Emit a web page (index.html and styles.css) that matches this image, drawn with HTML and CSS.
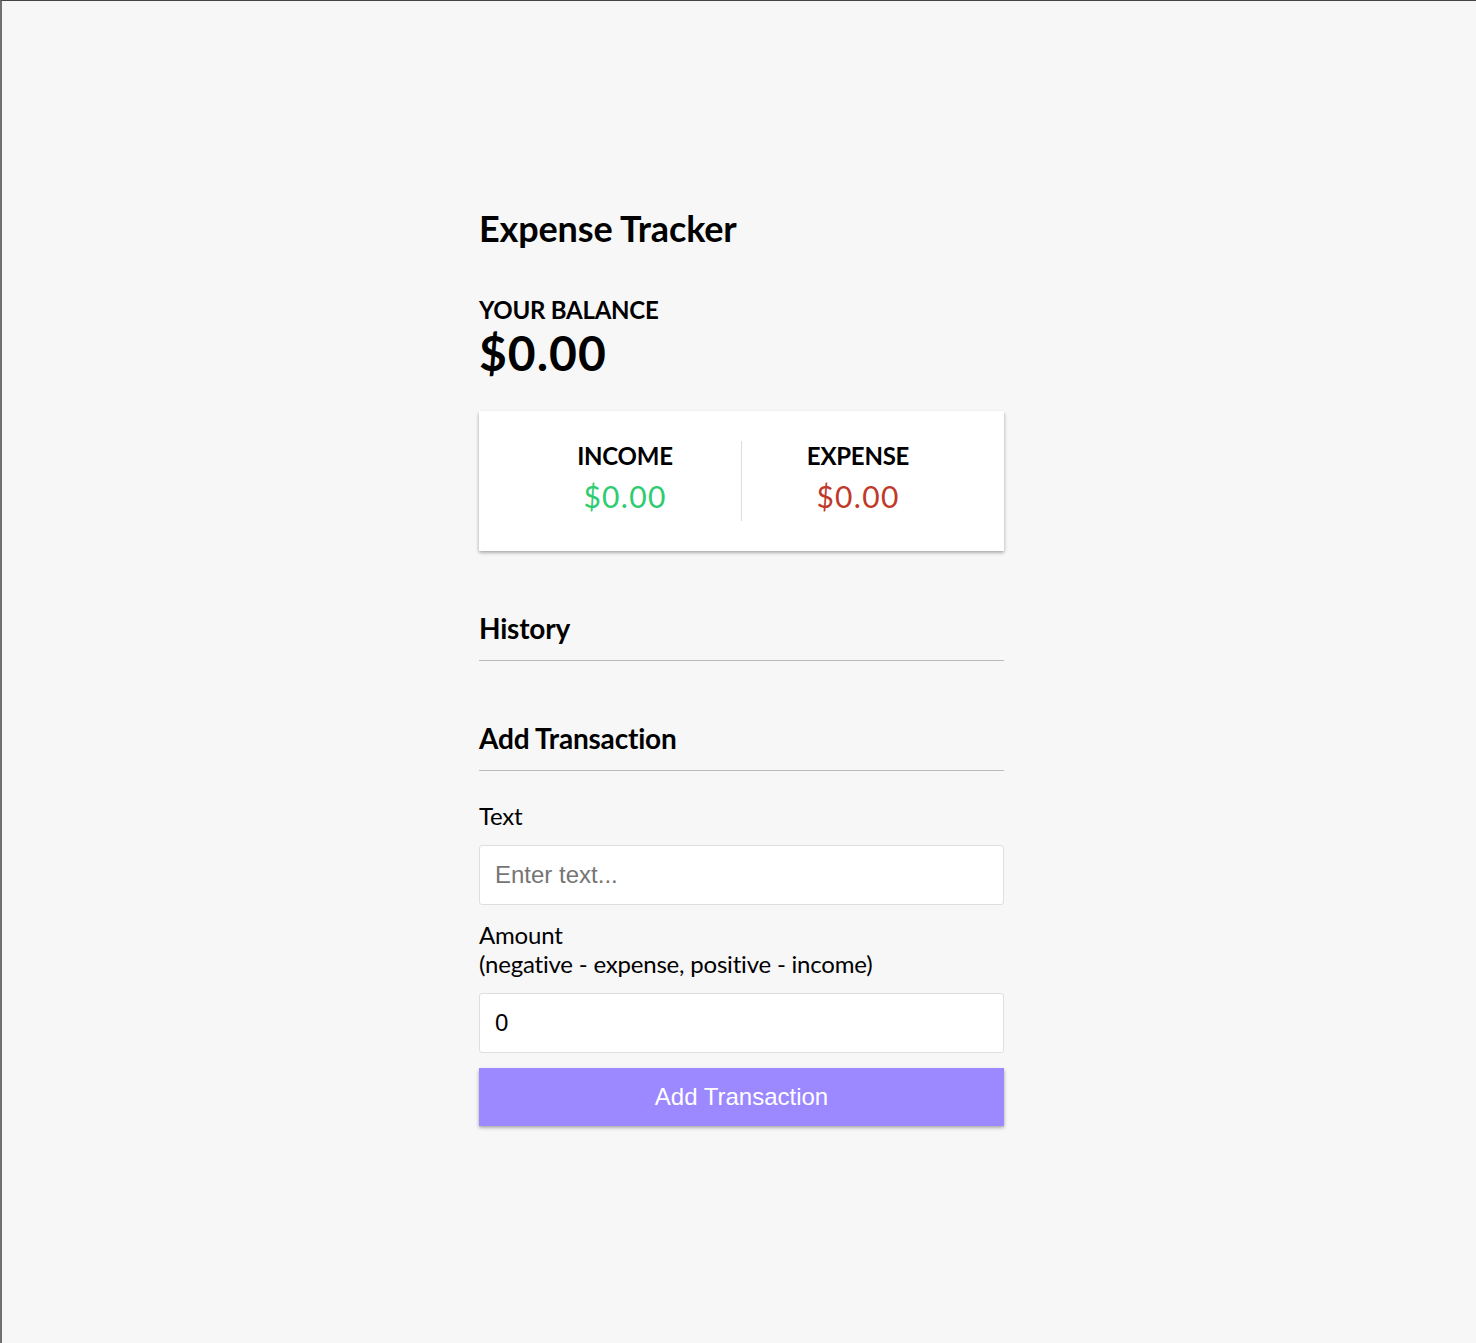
FILE: index.html
```html
<!DOCTYPE html>
<html lang="en">
<head>
  <meta charset="UTF-8">
  <meta name="viewport" content="width=device-width, initial-scale=1.0">
  <title>Expense Tracker</title>
  <link rel="stylesheet" href="styles.css">
</head>
<body>
  <div class="container">
    <h2>Expense Tracker</h2>

    <h4>Your Balance</h4>
    <h1 id="balance">$0.00</h1>

    <div class="inc-exp-container">
      <div>
        <h4>Income</h4>
        <p id="money-plus" class="money plus">$0.00</p>
      </div>
      <div>
        <h4>Expense</h4>
        <p id="money-minus" class="money minus">$0.00</p>
      </div>
    </div>

    <h3>History</h3>
    <ul id="list" class="list"></ul>

    <h3>Add Transaction</h3>
    <form id="form">
      <div class="form-control">
        <label for="text">Text</label>
        <input type="text" id="text" placeholder="Enter text...">
      </div>
      <div class="form-control">
        <label for="amount">Amount <br>(negative - expense, positive - income)</label>
        <input type="number" id="amount" value="0">
      </div>
      <button class="btn">Add Transaction</button>
    </form>
  </div>
</body>
</html>
```

FILE: styles.css
```css
:root {
  --box-shadow: 0 1.5px 4.5px rgba(0, 0, 0, 0.12), 0 1.5px 3px rgba(0, 0, 0, 0.24);
}

* {
  box-sizing: border-box;
}

body {
  background-color: #f7f7f7;
  margin: 0;
  padding-left: 5px;
  min-height: 100vh;
  border-top: 1px solid #444;
  border-left: 2px solid #707070;
  font-family: 'Lato', sans-serif;
  letter-spacing: -0.2px;
  color: #000;
}

.container {
  width: 525px;
  margin: 0 auto;
  padding-top: 205px;
}

h1 {
  font-size: 48px;
  letter-spacing: 1px;
  margin: 0;
}

h2 {
  font-size: 36px;
  letter-spacing: -0.15px;
  margin: 0 0 45px;
}

h3 {
  font-size: 28px;
  border-bottom: 1px solid #bbb;
  padding-bottom: 15px;
  margin: 60px 0 15px;
}

h4 {
  font-size: 24px;
  letter-spacing: -0.25px;
  margin: 0;
  text-transform: uppercase;
}

.inc-exp-container {
  background-color: #fff;
  box-shadow: var(--box-shadow);
  padding: 30px;
  display: flex;
  justify-content: space-between;
  margin: 30px 0;
}

.inc-exp-container > div {
  flex: 1;
  text-align: center;
}

.inc-exp-container > div:first-of-type {
  border-right: 1px solid #dedede;
}

.money {
  font-size: 30px;
  letter-spacing: 1.3px;
  margin: 7.5px 0;
}

.money.plus {
  color: #2ecc71;
}

.money.minus {
  color: #c0392b;
}

.list {
  list-style-type: none;
  padding: 0;
  margin: 24px 0 60px;
}

label {
  display: inline-block;
  font-size: 24px;
  margin: 15px 0;
}

input[type='text'],
input[type='number'] {
  border: 1px solid #dedede;
  border-radius: 3px;
  display: block;
  font-family: 'Liberation Sans', Arial, sans-serif;
  font-size: 24px;
  letter-spacing: normal;
  padding: 15px;
  width: 100%;
  background: #fff;
  color: #000;
}

input::placeholder {
  color: #757575;
}

.btn {
  cursor: pointer;
  background-color: #9c88ff;
  box-shadow: var(--box-shadow);
  color: #fff;
  border: 0;
  display: block;
  font-family: 'Liberation Sans', Arial, sans-serif;
  font-size: 24px;
  letter-spacing: normal;
  margin: 15px 0 45px;
  padding: 15px;
  width: 100%;
}
```
